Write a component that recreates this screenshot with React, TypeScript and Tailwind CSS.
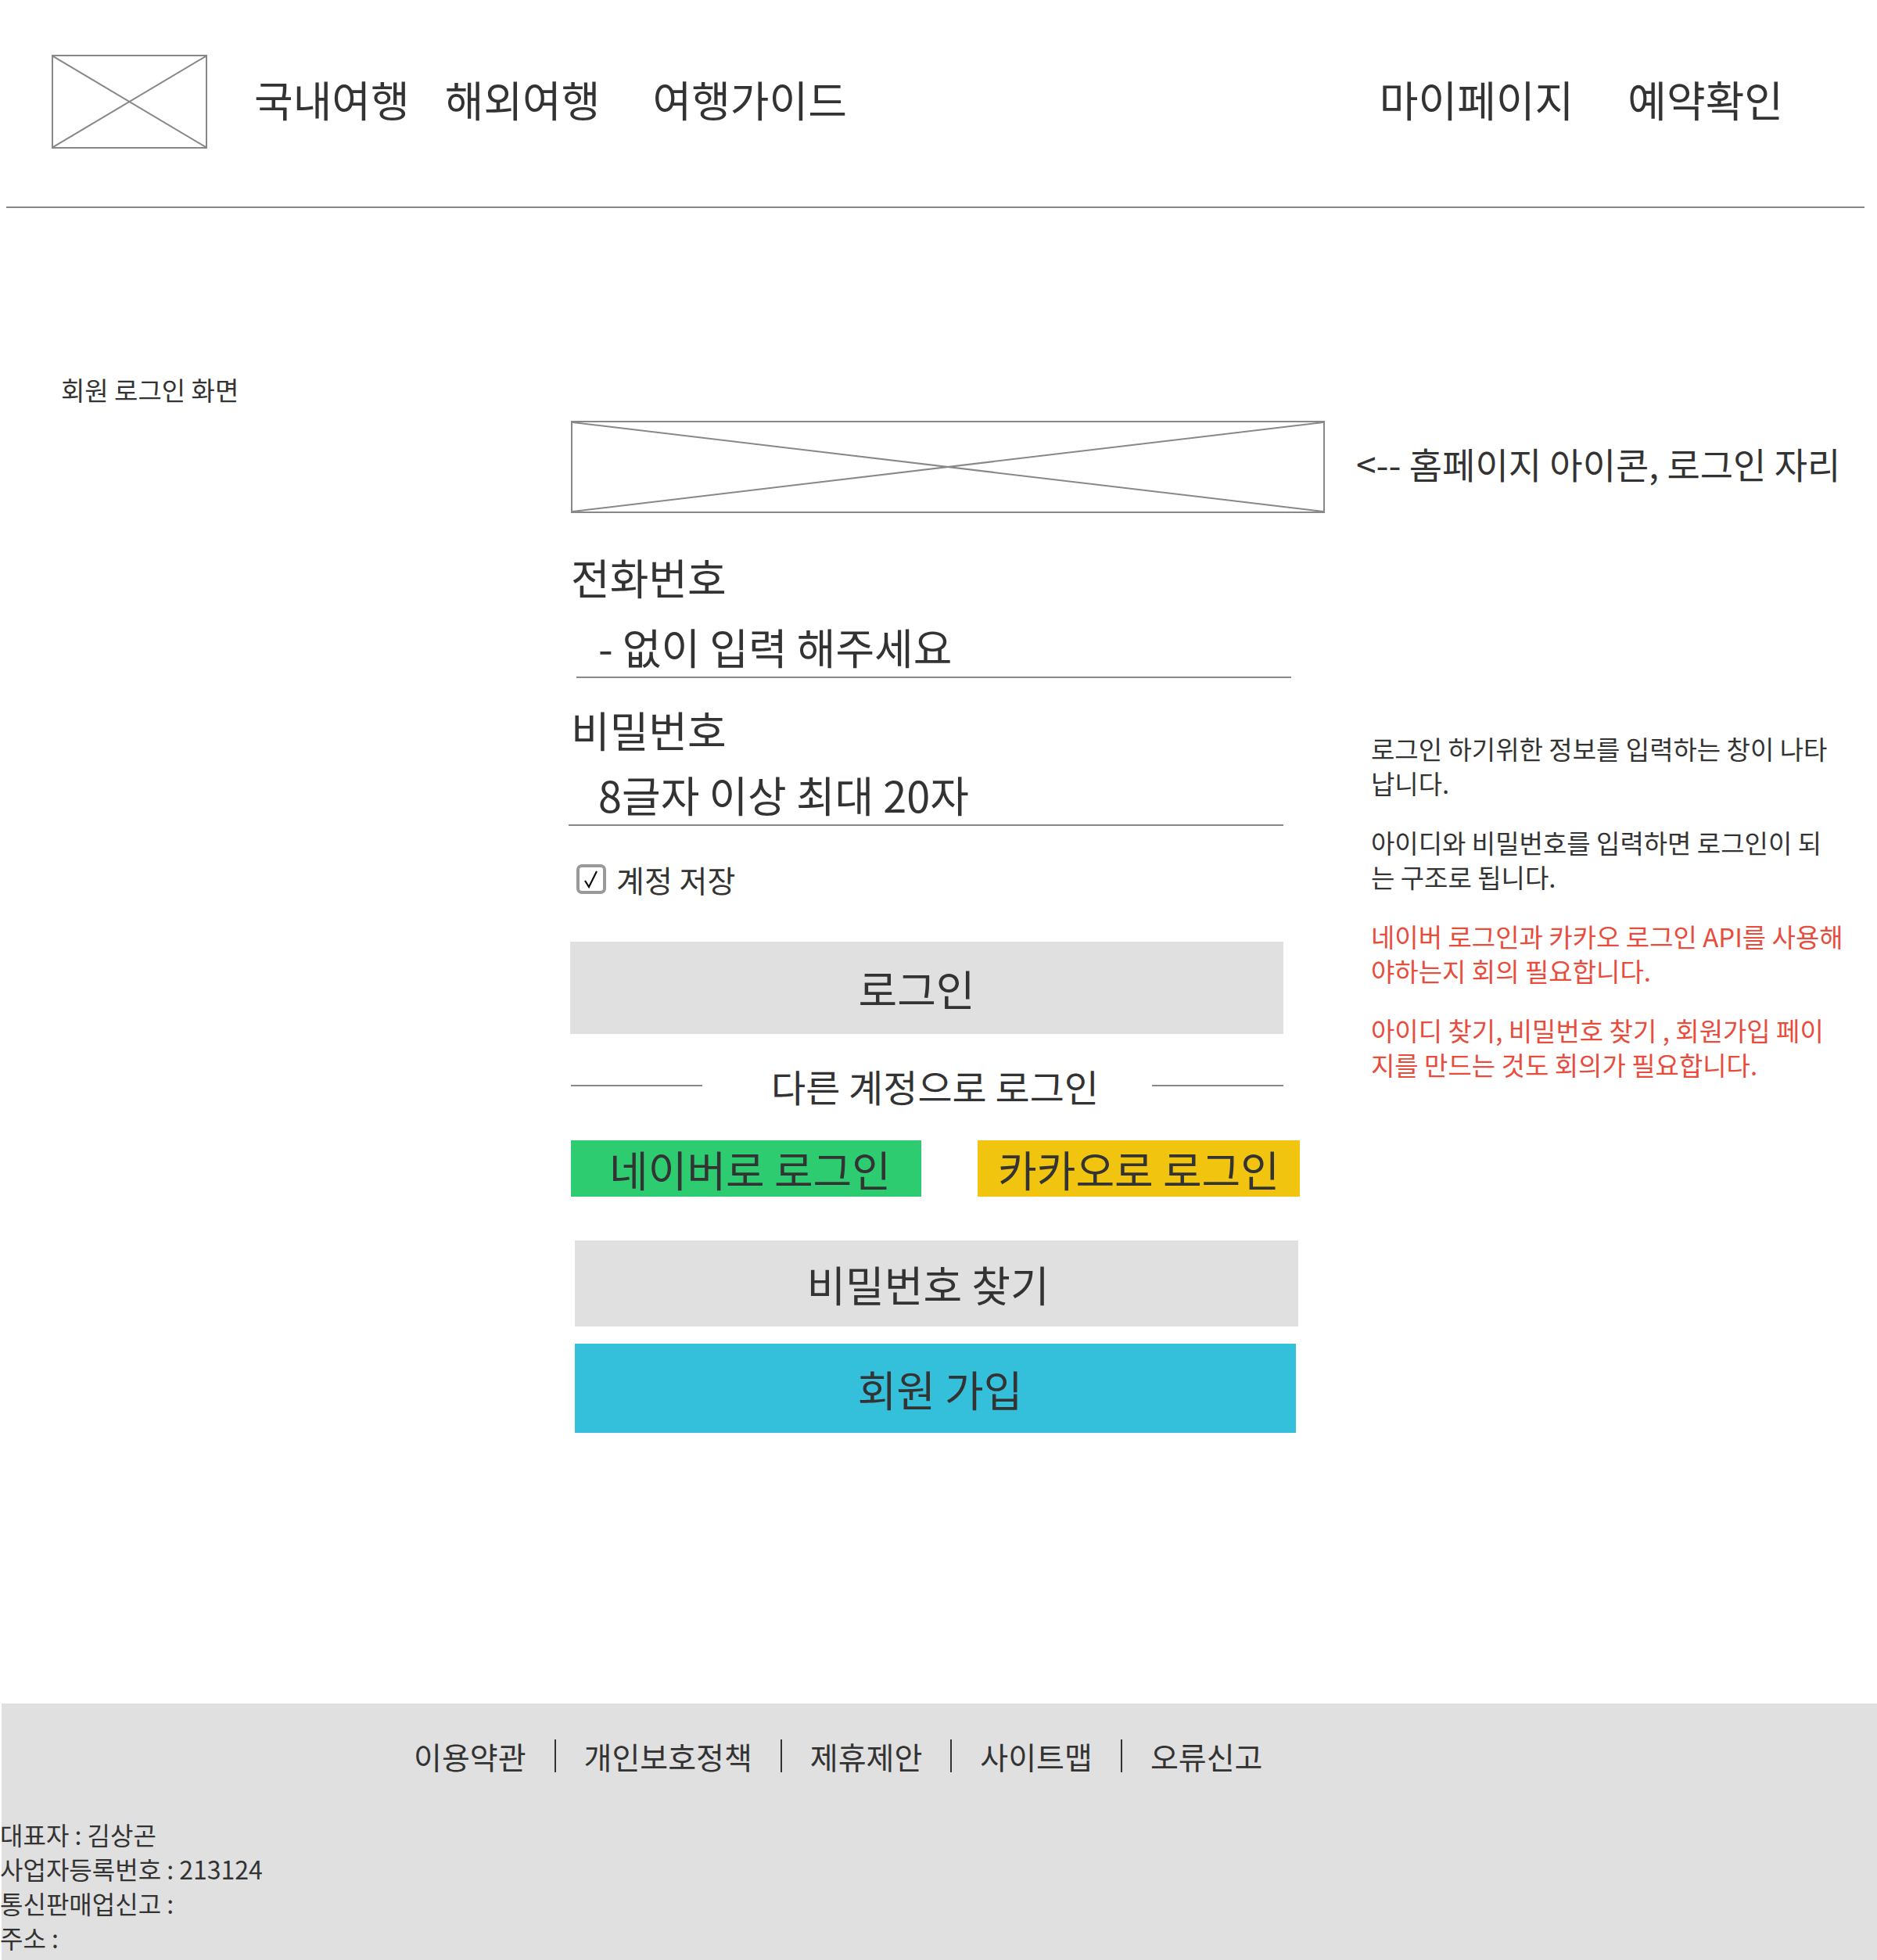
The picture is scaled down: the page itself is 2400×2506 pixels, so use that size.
import React from "react";

const font = { fontFamily: '"Noto Sans CJK KR", "Noto Sans", sans-serif' };

const XBox = ({ className }: { className: string }) => (
    <div className={`relative border-2 border-[#888] ${className}`}>
        <svg className="absolute inset-0 h-full w-full" viewBox="0 0 100 100" preserveAspectRatio="none">
            <line x1="0" y1="0" x2="100" y2="100" stroke="#888" strokeWidth="2" vectorEffect="non-scaling-stroke" />
            <line x1="100" y1="0" x2="0" y2="100" stroke="#888" strokeWidth="2" vectorEffect="non-scaling-stroke" />
        </svg>
    </div>
);

const Header = () => (
    <header>
        <div className="flex h-[120px] items-center mt-[70px] pl-[66px] text-[54px] leading-[64px] text-[#333]">
            <XBox className="h-[120px] w-[199px] shrink-0" />
            <span className="ml-[60px] -translate-y-[3px]">국내여행</span>
            <span className="ml-[45px] -translate-y-[3px]">해외여행</span>
            <span className="ml-[67px] -translate-y-[3px]">여행가이드</span>
            <span className="ml-auto -translate-y-[3px]">마이페이지</span>
            <span className="ml-[69px] mr-[120px] -translate-y-[3px]">예약확인</span>
        </div>
        <div className="mt-[74px] ml-[8px] h-[2px] w-[2376px] bg-[#888]" />
    </header>
);

const CenterColumn = () => (
    <div className="w-[964px] shrink-0 pt-[272px] text-[#333]">
        <XBox className="h-[118px] w-[964px]" />

        <div className="mt-[52px] h-[60px] text-[54px] leading-[60px]">전화번호</div>
        <div className="mt-[29px] h-[60px] pl-[35px] text-[54px] leading-[60px]">- 없이 입력 해주세요</div>
        <div className="mt-[8px] ml-[7px] h-[2px] w-[914px] bg-[#888]" />

        <div className="mt-[36px] h-[60px] text-[54px] leading-[60px]">비밀번호</div>
        <div className="mt-[23px] h-[60px] pl-[35px] text-[54px] leading-[60px]">8글자 이상 최대 20자</div>
        <div className="mt-[8px] -ml-[3px] h-[2px] w-[914px] bg-[#888]" />

        <div className="mt-[48px] flex h-[40px] items-center pl-[7px]">
            <div className="flex h-[38px] w-[38px] items-center justify-center rounded-[7px] border-[4px] border-[#999] bg-white">
                <svg width="24" height="26" viewBox="0 0 24 26">
                    <polyline points="4,15 9,23 19,3" fill="none" stroke="#111" strokeWidth="2.2" />
                </svg>
            </div>
            <span className="ml-[13px] text-[39px] leading-[40px]">계정 저장</span>
        </div>

        <div className="mt-[60px] -ml-[1px] flex h-[118px] w-[912px] items-center justify-center bg-[#e0e0e0] pr-[26px] text-[54px]">
            로그인
        </div>

        <div className="mt-[36px] flex h-[60px] w-[911px] items-center">
            <div className="h-[2px] w-[168px] bg-[#888]" />
            <div className="flex-1 pl-[20px] text-center text-[48px] leading-[60px]">다른 계정으로 로그인</div>
            <div className="h-[2px] w-[168px] bg-[#888]" />
        </div>

        <div className="mt-[40px] flex h-[72px]">
            <div className="flex w-[448px] items-center justify-center bg-[#2ecc71] pl-[10px] text-[54px]">네이버로 로그인</div>
            <div className="ml-[72px] flex w-[412px] items-center justify-center bg-[#f1c40f] text-[54px]">카카오로 로그인</div>
        </div>

        <div className="mt-[56px] ml-[5px] flex h-[110px] w-[925px] items-center justify-center bg-[#e0e0e0] pr-[22px] text-[54px]">
            비밀번호 찾기
        </div>
        <div className="mt-[22px] ml-[5px] flex h-[114px] w-[922px] items-center justify-center bg-[#34bfdb] pl-[12px] text-[54px]">
            회원 가입
        </div>
    </div>
);

const Notes = () => (
    <div className="pt-[299px] text-[#333]">
        <div className="ml-[40px] h-[54px] whitespace-nowrap text-[46px] leading-[54px]">&lt;-- 홈페이지 아이콘, 로그인 자리</div>
        <div className="mt-[316px] ml-[59px] whitespace-nowrap text-[33px] leading-[44px]">
            <p>로그인 하기위한 정보를 입력하는 창이 나타<br />납니다.</p>
            <p className="mt-[32px]">아이디와 비밀번호를 입력하면 로그인이 되<br />는 구조로 됩니다.</p>
            <p className="mt-[32px] text-[#e74c3c]">네이버 로그인과 카카오 로그인 API를 사용해<br />야하는지 회의 필요합니다.</p>
            <p className="mt-[32px] text-[#e74c3c]">아이디 찾기, 비밀번호 찾기 , 회원가입 페이<br />지를 만드는 것도 회의가 필요합니다.</p>
        </div>
    </div>
);

const Footer = () => {
    const links = ["이용약관", "개인보호정책", "제휴제안", "사이트맵", "오류신고"];
    return (
        <footer className="ml-[2px] h-[329px] bg-[#e0e0e0] text-[#333]">
            <div className="flex h-[44px] translate-y-[45px] items-center gap-[36px] pl-[527px] text-[39px] leading-[44px]">
                {links.map((l, i) => (
                    <React.Fragment key={l}>
                        {i > 0 && <div className="h-[42px] w-[2px] bg-[#333]" />}
                        <span>{l}</span>
                    </React.Fragment>
                ))}
            </div>
            <div className="mt-[101px] -ml-[2px] text-[32px] leading-[44px]">
                <div>대표자 : 김상곤</div>
                <div>사업자등록번호 : 213124</div>
                <div>통신판매업신고 :</div>
                <div>주소 :</div>
            </div>
        </footer>
    );
};

const App = () => {
    return (
        <div className="h-[2506px] w-[2400px] overflow-hidden bg-white" style={font}>
            <Header />
            <main className="flex h-[1912px]">
                <div className="w-[730px] shrink-0 pl-[78px] pt-[214px]">
                    <span className="text-[33px] leading-[36px] text-[#333]">회원 로그인 화면</span>
                </div>
                <CenterColumn />
                <Notes />
            </main>
            <Footer />
        </div>
    );
};

export default App;
